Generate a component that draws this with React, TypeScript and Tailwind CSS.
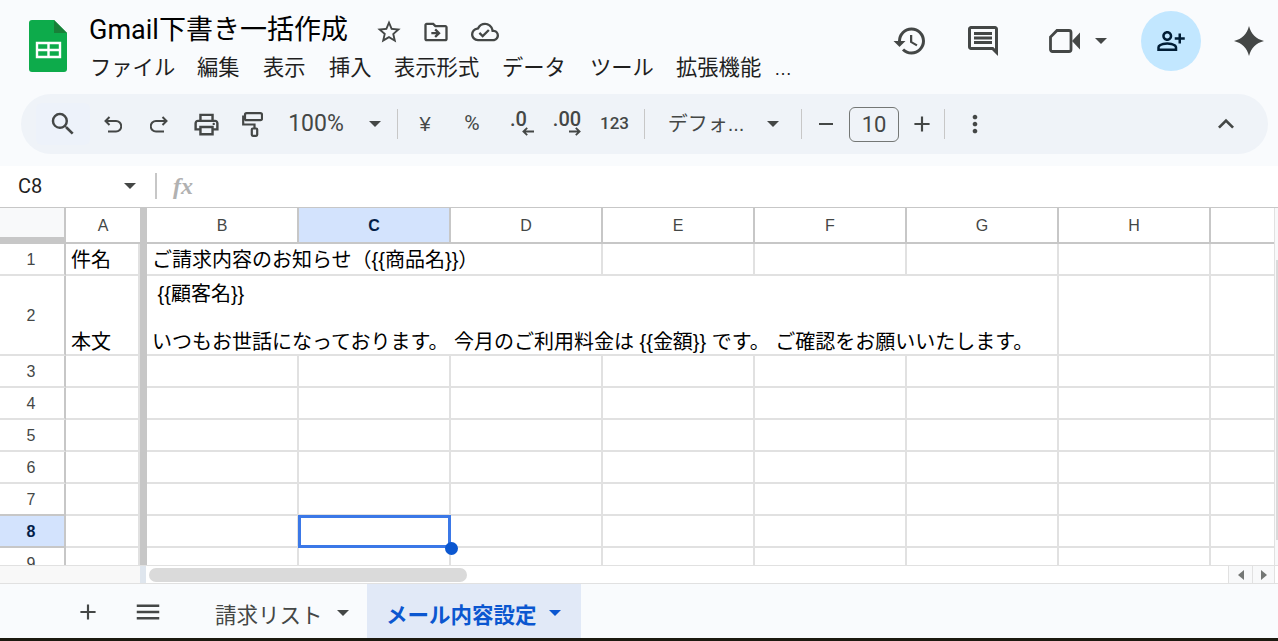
import React from "react";
import {
  MdSearch, MdOutlinePrint, MdStarBorder,
  MdOutlineDriveFileMove, MdOutlineCloudDone, MdHistory, MdOutlineComment, MdOutlinePersonAddAlt,
  MdMoreVert, MdExpandLess, MdAdd, MdRemove, MdMenu,
} from "react-icons/md";

function Caret({ className = "" }: { className?: string }) {
  return (
    <svg viewBox="0 0 12 6" className={"w-[12px] h-[6px] " + className} fill="currentColor">
      <path d="M0 0h12L6 6z" />
    </svg>
  );
}

function SheetsLogo() {
  return (
    <svg viewBox="0 0 38 52" className="w-[38px] h-[52px] shrink-0">
      <path d="M3 0H25L38 13V49a3 3 0 0 1-3 3H3a3 3 0 0 1-3-3V3a3 3 0 0 1 3-3z" fill="#0dab4b" />
      <path d="M25 0L38 13H25z" fill="#188038" />
      <path d="M8 23H31V37H8zM8 30H31M19.5 23V37" fill="none" stroke="#fff" strokeWidth="2.4" />
    </svg>
  );
}

function Slot({ w, children }: { w: string; children: React.ReactNode }) {
  return <div className={"flex items-center justify-center h-full shrink-0 " + w}>{children}</div>;
}

function Divider() {
  return <div className="w-px h-[30px] bg-[#c7c7c7] shrink-0" />;
}

function Arrow({ dir }: { dir: "l" | "r" }) {
  return (
    <svg viewBox="0 0 12 9" className="w-[12px] h-[9px]" fill="none" stroke="currentColor" strokeWidth="1.8">
      {dir === "l" ? <path d="M12 4.5H1.5M5.2 .8L1.4 4.5 5.2 8.2" /> : <path d="M0 4.5H10.5M6.8 .8L10.6 4.500 6.8 8.2" />}
    </svg>
  );
}

function UndoIcon({ flip }: { flip?: boolean }) {
  return (
    <svg viewBox="0 0 18 17" className={"w-[18px] h-[17px] " + (flip ? "-scale-x-100" : "")} fill="none" stroke="currentColor" strokeWidth="2">
      <path d="M5.500 1L1.500 5l4 4M1.500 5H12a4.800 4.800 0 0 1 0 10.500H4" />
    </svg>
  );
}

function PaintIcon() {
  return (
    <svg viewBox="0 0 21 25" className="w-[21px] h-[25px]" fill="none" stroke="currentColor" strokeWidth="2.200">
      <rect x="3" y="1.200" width="17" height="7" rx="1.500" />
      <path d="M3 4.500H1.200V12.500H12.500V16" />
      <rect x="9.800" y="16.500" width="5.400" height="7.300" rx="1" />
    </svg>
  );
}

const menu: [string, string][] = [
  ["ファイル", "w-[107px]"],
  ["編集", "w-[66px]"],
  ["表示", "w-[66px]"],
  ["挿入", "w-[65px]"],
  ["表示形式", "w-[108px]"],
  ["データ", "w-[88px]"],
  ["ツール", "w-[86px]"],
  ["拡張機能", "w-[98px]"],
];

function Header() {
  return (
    <div className="h-[94px] flex pl-[29px] pr-[14px] shrink-0">
      <div className="pt-[20px]">
        <SheetsLogo />
      </div>
      <div className="ml-[22px] flex flex-col flex-1 min-w-0 text-black">
        <div className="flex items-center h-[40px] pt-[20px]">
          <span className="text-[27px] leading-none font-['Roboto','Noto_Sans_CJK_JP',sans-serif] w-[286px] shrink-0 whitespace-nowrap">
            Gmail下書き一括作成
          </span>
          <MdStarBorder className="w-[28px] h-[28px] text-[#444746] shrink-0 mt-[3px]" />
          <MdOutlineDriveFileMove className="w-[28px] h-[28px] text-[#444746] ml-[19px] shrink-0 mt-[3px]" />
          <MdOutlineCloudDone className="w-[28px] h-[28px] text-[#444746] ml-[21px] shrink-0 mt-[3px]" />
        </div>
        <div className="flex items-center h-[34px] mt-[12px] text-[21.300px] leading-none text-[#1f1f1f] pl-[1px]">
          {menu.map(([t, w]) => (
            <span key={t} className={"whitespace-nowrap shrink-0 " + w}>
              {t}
            </span>
          ))}
          <span className="text-[18px] shrink-0">…</span>
        </div>
      </div>
      <div className="flex items-start shrink-0 text-[#444746] pt-[11px]">
        <div className="flex items-center h-[60px]">
          <MdHistory className="w-[36px] h-[36px] translate-x-[1px]" />
          <MdOutlineComment className="w-[36px] h-[36px] ml-[38px]" />
          <svg viewBox="0 0 31 24" className="w-[31px] h-[24px] ml-[48px]">
            <path d="M8 1.500H20a2 2 0 0 1 2 2V20.500a2 2 0 0 1-2 2H3.500a2 2 0 0 1-2-2V8z" fill="none" stroke="currentColor" strokeWidth="2.800" />
            <path d="M23 12L31 3.500V20.500z" fill="currentColor" />
          </svg>
          <Caret className="ml-[15px]" />
        </div>
        <div className="w-[60px] h-[60px] rounded-full bg-[#c2e7ff] flex items-center justify-center ml-[34px]">
          <MdOutlinePersonAddAlt className="w-[30px] h-[30px] text-[#001d35]" />
        </div>
        <div className="h-[60px] flex items-center ml-[33px]">
          <svg viewBox="0 0 30 30" className="w-[30px] h-[30px]" fill="currentColor">
            <path d="M15 0C17 8 22 13 30 15C22 17 17 22 15 30C13 22 8 17 0 15C8 13 13 8 15 0z" />
          </svg>
        </div>
      </div>
    </div>
  );
}

function Toolbar() {
  return (
    <div className="h-[72px] px-[21px] pb-[12px] shrink-0">
      <div className="h-[60px] w-[1247px] rounded-[30px] bg-[#eff3f8] flex items-center pl-[15px] text-[#444746]">
        <div className="w-[54px] h-[42px] bg-[#edf2fa] rounded-[6px] flex items-center justify-center shrink-0">
          <MdSearch className="w-[30px] h-[30px]" />
        </div>
        <Slot w="w-[46px]"><UndoIcon /></Slot>
        <Slot w="w-[45px]"><UndoIcon flip /></Slot>
        <Slot w="w-[50px]"><MdOutlinePrint className="w-[29px] h-[29px]" /></Slot>
        <Slot w="w-[42px]"><PaintIcon /></Slot>
        <Slot w="w-[70px]"><span className="text-[23px] font-['Roboto',sans-serif] pl-[16px]">100%</span></Slot>
        <Slot w="w-[54px]"><Caret className="ml-[10px]" /></Slot>
        <Divider />
        <Slot w="w-[54px]"><span className="text-[20px]">¥</span></Slot>
        <Slot w="w-[40px]"><span className="text-[21px] font-['Roboto',sans-serif]">%</span></Slot>
        <Slot w="w-[52px]">
          <div className="flex flex-col items-start pl-[8px]">
            <span className="text-[20px] leading-[14px] font-medium font-['Roboto',sans-serif]">.0</span>
            <span className="ml-[12px] mt-[1px]"><Arrow dir="l" /></span>
          </div>
        </Slot>
        <Slot w="w-[46px]">
          <div className="flex flex-col items-end">
            <span className="text-[20px] leading-[14px] font-medium font-['Roboto',sans-serif]">.00</span>
            <span className="mt-[1px]"><Arrow dir="r" /></span>
          </div>
        </Slot>
        <Slot w="w-[49px]"><span className="text-[17px] font-medium font-['Roboto',sans-serif]">123</span></Slot>
        <Slot w="w-[10px]"><Divider /></Slot>
        <Slot w="w-[114px]"><span className="text-[20px] whitespace-nowrap">デフォ...</span></Slot>
        <Slot w="w-[24px]"><Caret className="mr-[4px]" /></Slot>
        <div className="ml-[14px]"><Divider /></div>
        <Slot w="w-[47px]"><MdRemove className="w-[24px] h-[24px]" /></Slot>
        <div className="w-[50px] h-[35px] border border-[#747775] rounded-[6px] flex items-center justify-center text-[22px] font-['Roboto',sans-serif] shrink-0">
          10
        </div>
        <Slot w="w-[45px]"><MdAdd className="w-[26px] h-[26px]" /></Slot>
        <Divider />
        <Slot w="w-[59px]"><MdMoreVert className="w-[28px] h-[28px]" /></Slot>
        <div className="ml-auto w-[84px] h-full flex items-center justify-center shrink-0">
          <MdExpandLess className="w-[32px] h-[32px]" />
        </div>
      </div>
    </div>
  );
}

function FormulaBar() {
  return (
    <div className="h-[41px] flex items-center bg-white shrink-0 pl-[18px] pb-[1px] text-[#1f1f1f]">
      <span className="text-[20px] w-[106px] font-['Roboto',sans-serif]">C8</span>
      <Caret className="text-[#444746]" />
      <div className="w-[2px] h-[26px] bg-[#c7c7c7] ml-[19px]" />
      <span className="ml-[16px] text-[24px] font-bold italic text-[#b1b1b1] font-['Liberation_Serif',serif]">fx</span>
    </div>
  );
}

const cols = ["B", "C", "D", "E", "F", "G", "H"];
const line = "border-r-2 border-b-2 border-[#e1e1e1]";
const text = "text-[20px] leading-[23.500px] text-black whitespace-pre";

function Bar() {
  return <div className="w-[7px] bg-[#c7c7c7] shrink-0 self-stretch" />;
}

function RowHead({ n, active, dark }: { n: number; active?: boolean; dark?: boolean }) {
  return (
    <div
      className={
        "w-[66px] shrink-0 h-full flex items-center justify-center text-[16px] pr-[2px] pt-[2px] border-r-2 border-r-[#c7c7c7] border-b-2 " +
        (dark ? "border-b-[#c7c7c7] " : "border-b-[#e1e1e1] ") +
        (active ? "bg-[#d3e3fd] font-bold text-[#041e49]" : "bg-white text-[#444746]")
      }
    >
      {n}
    </div>
  );
}

function EmptyRow({ n }: { n: number }) {
  return (
    <div className="flex h-[32px] shrink-0">
      <RowHead n={n} active={n === 8} dark={n === 7 || n === 8} />
      <div className={"w-[74px] shrink-0 " + line} />
      <Bar />
      {cols.map((c) => (
        <div key={c} className={"w-[152px] shrink-0 " + line} />
      ))}
      <div className="w-[63px] shrink-0 border-b-2 border-[#e1e1e1]" />
    </div>
  );
}

function Grid() {
  return (
    <div className="relative h-[357px] overflow-hidden border-t border-[#c7c7c7] box-content shrink-0 flex bg-white">
      <div className="w-[1274px] shrink-0 flex flex-col">
        <div className="flex h-[36px] shrink-0 text-[16px] text-[#444746]">
          <div className="w-[66px] shrink-0 bg-[#f8f9fa] border-r-2 border-r-[#c7c7c7] border-b-[7px] border-b-[#c7c7c7]" />
          <div className="w-[74px] shrink-0 flex items-center justify-center pt-[2px] border-b-2 border-[#c7c7c7]">A</div>
          <Bar />
          {cols.map((c) => (
            <div
              key={c}
              className={
                "w-[152px] shrink-0 flex items-center justify-center pt-[2px] border-r-2 border-b-2 border-[#c7c7c7] " +
                (c === "C" ? "bg-[#d3e3fd] font-bold text-[#041e49]" : "")
              }
            >
              {c}
            </div>
          ))}
          <div className="w-[63px] shrink-0 border-b-2 border-[#c7c7c7]" />
        </div>
        <div className="flex h-[32px] shrink-0">
          <RowHead n={1} />
          <div className={"w-[74px] shrink-0 flex items-center pl-[5px] pt-[3px] " + line + " " + text}>件名</div>
          <Bar />
          <div className={"w-[456px] shrink-0 flex items-center pl-[5px] pt-[3px] " + line + " " + text}>
            ご請求内容のお知らせ（{"{{"}商品名{"}}"}）
          </div>
          {["E", "F", "G", "H"].map((c) => (
            <div key={c} className={"w-[152px] shrink-0 " + line} />
          ))}
          <div className="w-[63px] shrink-0 border-b-2 border-[#e1e1e1]" />
        </div>
        <div className="flex h-[80px] shrink-0">
          <RowHead n={2} />
          <div className={"w-[74px] shrink-0 flex items-end pl-[5px] " + line + " " + text}>本文</div>
          <Bar />
          <div className={"w-[912px] shrink-0 flex flex-col justify-end pl-[5px] " + line + " " + text}>
            <div className="-translate-y-[1px]">{" {{顧客名}}"}</div>
            <div>{"\u00a0"}</div>
            <div>いつもお世話になっております。 今月のご利用料金は {"{{金額}}"} です。 ご確認をお願いいたします。</div>
          </div>
          <div className={"w-[152px] shrink-0 " + line} />
          <div className="w-[63px] shrink-0 border-b-2 border-[#e1e1e1]" />
        </div>
        {[3, 4, 5, 6, 7, 8, 9].map((n) => (
          <EmptyRow key={n} n={n} />
        ))}
      </div>
      <div className="flex-1 border-l border-[#e1e1e1] bg-[#f8f9fa] flex justify-end">
        <div className="w-[2px] mt-[52px] h-[280px] bg-[#dadada]" />
      </div>
      <div className="absolute left-[298px] top-[307px] w-[153px] h-[33px] border-[3px] border-[#3b78e7]" />
      <div className="absolute left-[445px] top-[334px] w-[13px] h-[13px] rounded-full bg-[#0b57d0]" />
    </div>
  );
}

function ScrollRow() {
  return (
    <div className="h-[17px] flex border-t border-[#e1e1e1] bg-white shrink-0 border-b border-b-[#e1e1e1] box-content">
      <div className="w-[140px] bg-[#f8f8f8] shrink-0" />
      <div className="w-[6px] bg-[#dfe6ee] shrink-0" />
      <div className="w-[3px] shrink-0" />
      <div className="w-[318px] h-[14px] mt-[2px] rounded-full bg-[#dadada] shrink-0" />
      <div className="flex-1" />
      <div className="flex text-[#747775] bg-[#f8f9fa] border-l border-[#e1e1e1] h-full shrink-0">
        <div className="w-[24px] flex items-center justify-center border-r border-[#e1e1e1]">
          <svg viewBox="0 0 6 10" className="w-[6px] h-[10px]" fill="currentColor"><path d="M6 0V10L0 5z" /></svg>
        </div>
        <div className="w-[22px] flex items-center justify-center border-r border-[#e1e1e1]">
          <svg viewBox="0 0 6 10" className="w-[6px] h-[10px]" fill="currentColor"><path d="M0 0V10L6 5z" /></svg>
        </div>
      </div>
      <div className="w-[3px] shrink-0" />
    </div>
  );
}

function Tabs() {
  return (
    <div className="h-[54px] flex items-stretch bg-[#f9fbfd] shrink-0 text-[#444746]">
      <Slot w="w-[60px] ml-[58px] pt-[2px]"><MdAdd className="w-[26px] h-[26px]" /></Slot>
      <Slot w="w-[60px] pt-[2px]"><MdMenu className="w-[30px] h-[30px]" /></Slot>
      <div className="flex items-center w-[189px] pl-[37px] shrink-0">
        <span className="text-[21.500px] w-[122px] whitespace-nowrap mt-[10px]">請求リスト</span>
        <Caret className="mt-[3px]" />
      </div>
      <div className="flex items-center w-[214px] pl-[19px] bg-[#e1e9f7] text-[#0b57d0] shrink-0">
        <span className="text-[21.500px] font-bold w-[163px] whitespace-nowrap mt-[10px]">メール内容設定</span>
        <Caret className="mt-[3px]" />
      </div>
    </div>
  );
}

export default function App() {
  return (
    <div className="w-full h-screen overflow-hidden flex flex-col bg-[#1c1a10] font-['Liberation_Sans','Noto_Sans_CJK_JP',sans-serif]">
      <div className="bg-[#f9fbfd] shrink-0">
        <Header />
        <Toolbar />
      </div>
      <FormulaBar />
      <Grid />
      <ScrollRow />
      <Tabs />
    </div>
  );
}
